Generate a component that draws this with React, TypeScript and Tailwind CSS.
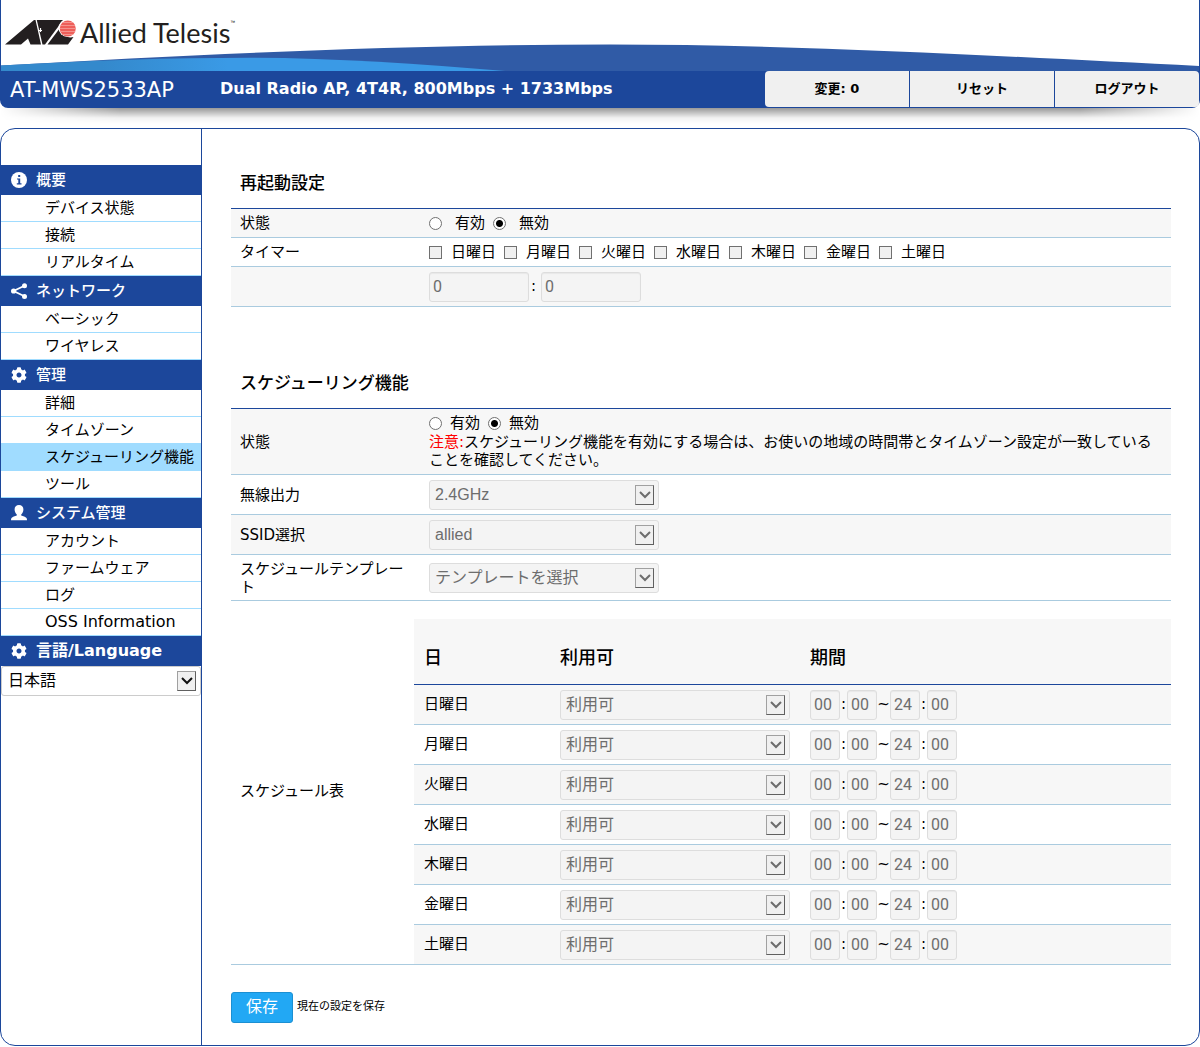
import type { ReactNode } from "react";
import { FaCog } from "react-icons/fa";

const DAYS = ["日曜日", "月曜日", "火曜日", "水曜日", "木曜日", "金曜日", "土曜日"];

const ACTIONS = ["変更: 0", "リセット", "ログアウト"];

const MENU = [
  { title: "概要", icon: <InfoIcon />, items: ["デバイス状態", "接続", "リアルタイム"] },
  { title: "ネットワーク", icon: <ShareIcon />, items: ["ベーシック", "ワイヤレス"] },
  {
    title: "管理",
    icon: <FaCog size={16} />,
    items: ["詳細", "タイムゾーン", "スケジューリング機能", "ツール"],
  },
  {
    title: "システム管理",
    icon: <UserIcon />,
    items: ["アカウント", "ファームウェア", "ログ", "OSS Information"],
  },
];

const ACTIVE_ITEM = "スケジューリング機能";

function InfoIcon() {
  return (
    <svg width="16" height="16" viewBox="0 0 16 16" aria-hidden="true">
      <circle cx="8" cy="8" r="8" fill="#fff" />
      <path d="M7.2 3h2v2h-2zM6 6.4h3.2v4.8h1.3v1.2H5.8v-1.2h1.5V7.6H6z" fill="#1c479b" />
    </svg>
  );
}

function ShareIcon() {
  return (
    <svg width="16" height="16" viewBox="0 0 16 16" fill="currentColor" aria-hidden="true">
      <path d="M13.500 2.800 2.500 8l11 5.300" fill="none" stroke="currentColor" strokeWidth="1.800" />
      <circle cx="13.500" cy="2.700" r="2.500" />
      <circle cx="2.600" cy="8" r="2.600" />
      <circle cx="13.500" cy="13.400" r="2.500" />
    </svg>
  );
}

function UserIcon() {
  return (
    <svg width="16" height="16" viewBox="0 0 16 16" fill="currentColor" aria-hidden="true">
      <path d="M8 0c2.700 0 4.400 1.700 4.400 4.200 0 2.300-.9 4.200-2.200 5.300v1c1.800.9 4.400 1.300 5.300 2.400.4.500.5 1.400.5 2.400H0c0-1 .1-1.900.5-2.400.9-1.100 3.500-1.500 5.300-2.400v-1C4.500 8.400 3.600 6.500 3.600 4.200 3.600 1.700 5.300 0 8 0z" />
    </svg>
  );
}

function LogoMark() {
  return (
    <svg width="71" height="26" viewBox="0 0 71 26" aria-hidden="true">
      <path d="M0 25.500 29 1h1.500l5.500 24.500H25.500l-2.500-6-7 6z" fill="#231f20" />
      <path d="M31.800 1H58l-2.500 3.500L40 25.500h-2.500z" fill="#231f20" />
      <path d="M42.500 25.500 56.500 7c1 7 4 11 9 11.500l3-.5-5.500 7.500z" fill="#231f20" />
      <path d="M33 11.500h4M35.500 9v4" stroke="#fff" strokeWidth="1.200" />
      <circle cx="62.500" cy="9" r="9" fill="#fff" />
      <circle cx="62.800" cy="9.500" r="8" fill="#ee5f5a" />
      <path
        d="M58 3.500h10M56 6.500h14M55 9.500h16M56 12.500h14M58 15.500h10"
        stroke="#f4938e"
        strokeWidth="1"
      />
    </svg>
  );
}

function Header() {
  return (
    <header>
      <div className="relative h-[71px] border-x border-[#1c479b]">
        {/* Wave behind the title bar */}
        <svg
          className="absolute inset-x-0 bottom-0 h-[27px] w-full"
          viewBox="0 0 1200 27"
          preserveAspectRatio="none"
          aria-hidden="true"
        >
          <defs>
            <linearGradient id="wave" x1="0" x2="1" y1="0" y2="0">
              <stop offset="0.200" stopColor="#3489cc" />
              <stop offset="0.450" stopColor="#3a9ae6" />
            </linearGradient>
          </defs>
          <path d="M0 21.500C220 9 420 .5 610 .5S1020 13 1200 22v5H0z" fill="#305ba6" />
          <path d="M0 21.500C90 16.500 170 13.800 250 13.800S420 20 505 27H0z" fill="url(#wave)" />
        </svg>
        <div className="relative flex items-start pt-[19px] pl-1">
          <LogoMark />
          <span className="ml-1 font-['Lato',sans-serif] text-[27px] leading-7 whitespace-nowrap text-[#231f20]">
            Allied Telesis
          </span>
          <span className="font-['Liberation_Sans',sans-serif] text-[5px] leading-[6px]">™</span>
        </div>
      </div>
      <div className="flex h-[37px] rounded-b-lg bg-[#1c479b] pr-px pb-px text-white">
        <h1 className="w-[220px] pl-[10px] text-[21px] leading-[38px] whitespace-nowrap">AT-MWS2533AP</h1>
        <p className="flex-1 text-base leading-9 font-bold whitespace-nowrap">
          Dual Radio AP, 4T4R, 800Mbps + 1733Mbps
        </p>
        <nav className="flex gap-px overflow-hidden rounded-sm">
          {ACTIONS.map((label) => (
            <a
              key={label}
              href="#"
              className="w-36 bg-[#f0f0f0] text-center text-[13px] leading-9 font-bold text-black"
            >
              {label}
            </a>
          ))}
        </nav>
      </div>
      <div className="h-5 bg-linear-to-b from-black/40 via-black/5 via-50% to-transparent to-80% mask-x-from-90%" />
    </header>
  );
}

function Arrow({ muted }: { muted?: boolean }) {
  return (
    <span className="pointer-events-none absolute top-[5px] right-[5px] flex h-5 w-[19px] items-center justify-center border border-t-[#a0a0a0] border-r-[#606060] border-b-[#606060] border-l-[#a0a0a0] bg-[#f0f0f0]">
      <svg width="12" height="8" viewBox="0 0 12 8" fill="none" aria-hidden="true">
        <path d="M1 1l5 5 5-5" stroke={muted ? "#6d6d6d" : "#111"} strokeWidth="2" />
      </svg>
    </span>
  );
}

function DisabledSelect({ label, value }: { label: string; value: string }) {
  return (
    <div className="relative w-[230px]">
      <select
        disabled
        aria-label={label}
        className="block h-[30px] w-full appearance-none rounded-[3px] border border-[#ddd] bg-[#f4f4f4] pl-[5px] font-['Liberation_Sans','Noto_Sans_CJK_JP',sans-serif] text-base leading-6 text-[#6d6d6d] opacity-100"
      >
        <option>{value}</option>
      </select>
      <Arrow muted />
    </div>
  );
}

function TimeInput({ label, value, wide }: { label: string; value: string; wide?: boolean }) {
  return (
    <input
      type="text"
      disabled
      aria-label={label}
      defaultValue={value}
      className={`${wide ? "w-[100px]" : "w-[30px]"} h-[30px] rounded-[3px] border border-[#ddd] bg-[#f4f4f4] pl-[3px] font-['Roboto',sans-serif] text-base text-[#6d6d6d] inset-shadow-xs`}
    />
  );
}

function Radio({ name, label, checked, gap }: { name: string; label: string; checked?: boolean; gap: string }) {
  return (
    <label className={`flex items-center ${gap}`}>
      <input
        type="radio"
        name={name}
        defaultChecked={checked}
        className="size-[13px] appearance-none rounded-full border border-[#707070] bg-white checked:bg-[radial-gradient(circle,#000_3px,#fff_4px)]"
      />
      {label}
    </label>
  );
}

function Row({ label, shaded, height, children }: { label?: string; shaded?: boolean; height: string; children: ReactNode }) {
  return (
    <tr className={shaded ? "bg-[#f7f7f7]" : ""}>
      <th scope="row" className={`${height} border-b border-[#aacbdf] pr-2 pl-[9px] text-left leading-[18px] font-normal`}>
        {label}
      </th>
      <td className="border-b border-[#aacbdf] pr-2 pl-[15px]">{children}</td>
    </tr>
  );
}

function FormTable({ children }: { children: ReactNode }) {
  return (
    <table className="w-full table-fixed border-separate border-spacing-0 border-t border-[#1c479b]">
      <colgroup>
        <col className="w-[183px]" />
        <col />
      </colgroup>
      <tbody>{children}</tbody>
    </table>
  );
}

function Sidebar() {
  return (
    <nav className="w-[201px] shrink-0 border-r border-[#1c479b] pt-9">
      {MENU.map((group) => (
        <div key={group.title}>
          <h2 className="flex h-[30px] items-center gap-[9px] bg-[#1c479b] pl-[10px] font-medium text-white">
            {group.icon}
            {group.title}
          </h2>
          <ul>
            {group.items.map((item) => (
              <li key={item} className="border-b border-[#a0dcff]">
                <a
                  href="#"
                  className={`block pl-11 leading-[26px] whitespace-nowrap ${item === ACTIVE_ITEM ? "bg-[#a0dcff]" : ""} ${item.startsWith("OSS") ? "text-base leading-[26px]" : ""}`}
                >
                  {item}
                </a>
              </li>
            ))}
          </ul>
        </div>
      ))}
      <label
        htmlFor="language"
        className="flex h-[30px] items-center gap-[9px] bg-[#1c479b] pl-[10px] text-base font-bold text-white"
      >
        <FaCog size={16} />
        言語/Language
      </label>
      <div className="relative">
        <select
          id="language"
          className="block h-[30px] w-full appearance-none rounded-[3px] border border-[#ccc] bg-white pb-px pl-[6px] text-base leading-6"
        >
          <option>日本語</option>
        </select>
        <Arrow />
      </div>
    </nav>
  );
}

function ScheduleTable() {
  return (
    <table className="w-full table-fixed border-separate border-spacing-0">
      <colgroup>
        <col className="w-[136px]" />
        <col className="w-[250px]" />
        <col />
      </colgroup>
      <thead>
        <tr className="bg-[#f7f7f7] text-left text-lg">
          {["日", "利用可", "期間"].map((title) => (
            <th key={title} className="h-[66px] border-b border-[#1c479b] pt-3 pl-[10px] font-medium">
              {title}
            </th>
          ))}
        </tr>
      </thead>
      <tbody>
        {DAYS.map((day, i) => (
          <tr key={day} className="odd:bg-[#f7f7f7]">
            <th
              scope="row"
              className={`border-[#aacbdf] pl-[10px] text-left font-normal ${i < 6 ? "h-10 border-b" : "h-[39px]"}`}
            >
              {day}
            </th>
            <td className={`border-[#aacbdf] pl-[10px] ${i < 6 ? "border-b" : ""}`}>
              <DisabledSelect label={day} value="利用可" />
            </td>
            <td className={`border-[#aacbdf] pl-[10px] ${i < 6 ? "border-b" : ""}`}>
              <div className="flex items-center text-center">
                <TimeInput label={`${day} 開始 時`} value="00" />
                <span className="w-[7px]">:</span>
                <TimeInput label={`${day} 開始 分`} value="00" />
                <span className="w-[13px]">~</span>
                <TimeInput label={`${day} 終了 時`} value="24" />
                <span className="w-[7px]">:</span>
                <TimeInput label={`${day} 終了 分`} value="00" />
              </div>
            </td>
          </tr>
        ))}
      </tbody>
    </table>
  );
}

export default function App() {
  return (
    <div className="bg-white pb-px font-['DejaVu_Sans','Noto_Sans_CJK_JP',sans-serif] text-[15px] text-black">
      <Header />
      <div className="flex rounded-[15px] border border-[#1c479b]">
        <Sidebar />
        <main className="min-w-0 flex-1 pr-7 pb-[22px] pl-[29px]">
          {/* Reboot settings */}
          <h2 className="mt-[29px] pl-[9px] text-[17px] leading-[50px] font-medium">再起動設定</h2>
          <FormTable>
            <Row label="状態" shaded height="h-[29px]">
              <div className="flex items-center gap-2">
                <Radio name="reboot" label="有効" gap="gap-[13px]" />
                <Radio name="reboot" label="無効" gap="gap-[13px]" checked />
              </div>
            </Row>
            <Row label="タイマー" height="h-[29px]">
              <div className="flex items-center gap-2">
                {DAYS.map((day) => (
                  <label key={day} className="flex items-center gap-[9px] whitespace-nowrap">
                    <input
                      type="checkbox"
                      disabled
                      className="size-[13px] appearance-none border border-[#707070] bg-[#f0f0f0]"
                    />
                    {day}
                  </label>
                ))}
              </div>
            </Row>
            <Row shaded height="h-10">
              <div className="flex items-center">
                <TimeInput label="時" value="0" wide />
                <span className="w-3 pl-[2px]">:</span>
                <TimeInput label="分" value="0" wide />
              </div>
            </Row>
          </FormTable>

          {/* Scheduling */}
          <h2 className="mt-[51px] pl-[9px] text-[17px] leading-[50px] font-medium">スケジューリング機能</h2>
          <FormTable>
            <Row label="状態" shaded height="h-[66px]">
              <div className="flex items-center gap-2 leading-[19px]">
                <Radio name="schedule" label="有効" gap="gap-2" />
                <Radio name="schedule" label="無効" gap="gap-2" checked />
              </div>
              <p className="leading-[18px]">
                <span className="text-[#f00]">注意:</span>
                スケジューリング機能を有効にする場合は、お使いの地域の時間帯とタイムゾーン設定が一致していることを確認してください。
              </p>
            </Row>
            <Row label="無線出力" height="h-10">
              <DisabledSelect label="無線出力" value="2.4GHz" />
            </Row>
            <Row label="SSID選択" shaded height="h-10">
              <DisabledSelect label="SSID選択" value="allied" />
            </Row>
            <Row label="スケジュールテンプレート" height="h-[46px]">
              <DisabledSelect label="スケジュールテンプレート" value="テンプレートを選択" />
            </Row>
            <tr>
              <th scope="row" className="border-b border-[#aacbdf] pt-[18px] pl-[9px] text-left font-normal">
                スケジュール表
              </th>
              <td className="border-b border-[#aacbdf] pt-[18px]">
                <ScheduleTable />
              </td>
            </tr>
          </FormTable>

          <div className="mt-[27px] flex items-center gap-1">
            <button
              type="button"
              className="h-[31px] w-[62px] rounded-[3px] border border-[#1b8fd2] bg-[#22a8f4] pb-px text-base leading-6 text-white"
            >
              保存
            </button>
            <span className="text-[11px]">現在の設定を保存</span>
          </div>
        </main>
      </div>
    </div>
  );
}
